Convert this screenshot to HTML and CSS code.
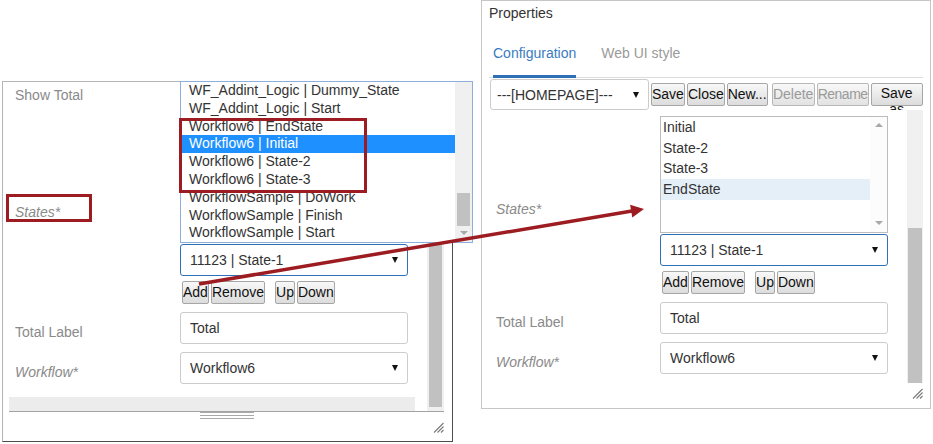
FILE: index.html
```html
<!DOCTYPE html>
<html>
<head>
<meta charset="utf-8">
<title>Properties</title>
<link rel="stylesheet" href="styles.css">
</head>
<body>
<div class="canvas">

  <section class="win win-left">
    <div class="scroll scroll-left">
      <div class="scroll-content">
        <div class="form form-left">
          <div class="lbl lbl-top">Show Total</div>
          <div class="ctl ctl-top"><input type="checkbox" class="chk"></div>

          <div class="lbl req">States*</div>
          <div class="ctl states">
            <div class="listbox listbox-left"></div>
            <div class="select focus"><span>11123 | State-1</span><i class="caret"></i></div>
            <div class="btnrow">
              <button class="btn">Add</button><button class="btn">Remove</button><button class="btn btn-up">Up</button><button class="btn">Down</button>
            </div>
          </div>

          <div class="lbl">Total Label</div>
          <div class="ctl"><input class="input" type="text" value="Total"></div>

          <div class="lbl req">Workflow*</div>
          <div class="ctl"><div class="select"><span>Workflow6</span><i class="caret"></i></div></div>
        </div>
      </div>
      <div class="vscroll"><div class="vthumb"></div></div>
      <div class="hscroll"></div>
    </div>
    <div class="foot foot-left">
      <div class="gripper"></div>
      <svg class="grip" width="11" height="11" viewBox="0 0 11 11"><path d="M1 10.5L10.5 1M4.5 10.5L10.5 4.5M8 10.5L10.5 8" stroke="#7a7a7a" stroke-width="1.1" fill="none"/></svg>
    </div>
  </section>

  <section class="win win-right">
    <div class="title">Properties</div>
    <nav class="tabs">
      <span class="tab active">Configuration</span>
      <span class="tab">Web UI style</span>
    </nav>
    <div class="toolbar">
      <div class="select sm"><span>---[HOMEPAGE]---</span><i class="caret"></i></div>
      <button class="btn">Save</button>
      <button class="btn">Close</button>
      <button class="btn">New...</button>
      <button class="btn btn-delete" disabled>Delete</button>
      <button class="btn btn-rename" disabled>Rename</button>
      <button class="btn btn-saveas"><span>Save as</span></button>
    </div>
    <div class="scroll scroll-right">
      <div class="scroll-content">
        <div class="form form-right">
          <div class="lbl req">States*</div>
          <div class="ctl states">
            <div class="listbox listbox-right">
              <ul class="opts">
                <li>Initial</li>
                <li>State-2</li>
                <li>State-3</li>
                <li class="hl">EndState</li>
              </ul>
              <div class="lb-scroll"><i class="tri-up"></i><i class="tri-down"></i></div>
            </div>
            <div class="select focus"><span>11123 | State-1</span><i class="caret"></i></div>
            <div class="btnrow">
              <button class="btn">Add</button><button class="btn">Remove</button><button class="btn btn-up">Up</button><button class="btn">Down</button>
            </div>
          </div>

          <div class="lbl">Total Label</div>
          <div class="ctl"><input class="input" type="text" value="Total"></div>

          <div class="lbl req">Workflow*</div>
          <div class="ctl"><div class="select"><span>Workflow6</span><i class="caret"></i></div></div>
        </div>
      </div>
      <div class="vscroll"><div class="vthumb"></div></div>
    </div>
    <div class="foot foot-right">
      <svg class="grip" width="11" height="11" viewBox="0 0 11 11"><path d="M1 10.5L10.5 1M4.5 10.5L10.5 4.5M8 10.5L10.5 8" stroke="#7a7a7a" stroke-width="1.1" fill="none"/></svg>
    </div>
  </section>

  <div class="dropdown">
    <ul class="dd-opts">
      <li>WF_Addint_Logic | Dummy_State</li>
      <li>WF_Addint_Logic | Start</li>
      <li>Workflow6 | EndState</li>
      <li class="sel">Workflow6 | Initial</li>
      <li>Workflow6 | State-2</li>
      <li>Workflow6 | State-3</li>
      <li>WorkflowSample | DoWork</li>
      <li>WorkflowSample | Finish</li>
      <li>WorkflowSample | Start</li>
    </ul>
    <div class="dd-scroll"><div class="dd-thumb"></div><i class="tri-down"></i></div>
  </div>

  <div class="mark mark-list"></div>
  <div class="mark mark-label"></div>

  <svg class="arrow" width="933" height="444" viewBox="0 0 933 444">
    <line x1="199" y1="284" x2="632" y2="211" stroke="#9c1c21" stroke-width="3.5"/>
    <polygon points="644,209 630.1,204.8 632.3,217.6" fill="#9c1c21"/>
  </svg>
</div>
</body>
</html>
```

FILE: styles.css
```css
* { box-sizing: border-box; }
html, body { margin: 0; padding: 0; background: #fff; }
body {
  font-family: "Liberation Sans", Arial, sans-serif;
  font-size: 14px;
  color: #333;
}
.canvas { position: relative; width: 933px; height: 444px; overflow: hidden; }

/* windows */
.win { position: absolute; background: #fff; display: flex; flex-direction: column; }
.win > * { flex: none; }
.win-left {
  left: 2px; top: 81px; width: 451px; height: 361px;
  border: 1px solid #b5b5b5;
  border-right-color: #4d4d4d;
  border-bottom-color: #4d4d4d;
}
.win-right {
  left: 481px; top: 0; width: 450px; height: 409px;
  border: 1px solid #c6c6c6;
}

/* scroll areas */
.scroll { display: grid; }
.scroll-content { overflow: hidden; grid-column: 1; grid-row: 1; }
.vscroll { background: #f0f0f0; display: flex; flex-direction: column; justify-content: flex-end; grid-column: 2; }
.vthumb { background: #c1c1c1; }
.hscroll { grid-column: 1; grid-row: 2; background: #ececec; margin-right: 12px; }

.scroll-left {
  height: 330px;
  margin: 0 8px 0 6px;
  border-bottom: 1px solid #a3a3a3;
  grid-template-columns: 1fr 17px;
  grid-template-rows: 1fr 14px;
}
.scroll-left .vscroll { grid-row: 1 / span 2; }
.scroll-left .vthumb { height: 250px; margin: 0 2px 4px; }

.scroll-right {
  height: 273px;
  margin: 0 7px;
  grid-template-columns: 1fr 16px;
  grid-template-rows: 1fr;
}
.scroll-right .vscroll { grid-row: 1; }
.scroll-right .vthumb { height: 155px; margin: 0 1px; }

/* footers */
.foot { display: flex; flex-direction: column; }
.foot-left { height: 29px; margin: 0 8px 0 6px; }
.foot-right { height: 25px; margin: 0 7px; }
.gripper {
  width: 54px; height: 7px; align-self: center;
  background: repeating-linear-gradient(to bottom, #a8a8a8 0 1px, transparent 1px 3px);
}
.grip { display: block; align-self: flex-end; }
.foot-left .grip { margin-top: 3px; }
.foot-right .grip { margin-top: 5px; }

/* header / tabs / toolbar */
.title { height: 21px; padding: 3px 0 0 7px; line-height: 18px; color: #333; }
.tabs {
  display: flex; gap: 25px;
  margin: 0 7px; padding: 0 4px;
  border-bottom: 1px solid #dcdcdc;
}
.tab {
  padding: 22px 0 13px;
  line-height: 18px;
  color: #9a9a9a;
  border-bottom: 3px solid transparent;
  margin-bottom: -1px;
}
.tab.active { color: #3a7cc0; border-bottom-color: #2f6fb5; }

.toolbar {
  display: flex; align-items: center; gap: 2px;
  height: 31px; margin-top: 1px; padding-left: 8px;
  overflow: hidden;
}
.toolbar > * { flex: none; }

/* form */
.form { display: grid; row-gap: 8px; align-items: center; }
.form-left { grid-template-columns: 165px 228px; padding-left: 6px; }
.form-right { grid-template-columns: 164px 228px; padding: 6px 0 0 7px; }
.lbl { color: #8a8a8a; line-height: 18px; padding-top: 8px; white-space: nowrap; }
.lbl.req { font-style: italic; }
.lbl-top { padding-top: 4px; align-self: start; }
.ctl-top { align-self: start; }
.chk { margin: 4px 0 0 4px; }

.states { display: flex; flex-direction: column; }

/* controls */
.select {
  height: 32px;
  border: 1px solid #cccccc; border-radius: 3px;
  background: #fff;
  display: flex; align-items: center; justify-content: space-between;
  padding: 0 9px;
  color: #333;
  white-space: nowrap;
}
.select.focus { border-color: #2f70b6; }
.states .select { margin-top: 1px; }
.select.sm { width: 159px; height: 31px; padding: 0 9px 0 6px; }
.caret {
  display: block; width: 0; height: 0;
  border-left: 3.5px solid transparent;
  border-right: 3.5px solid transparent;
  border-top: 6px solid #111;
}
.input {
  display: block; width: 100%; height: 32px;
  border: 1px solid #cccccc; border-radius: 3px;
  padding: 0 9px;
  font: inherit; color: #333; background: #fff;
  outline: none;
}

.listbox { display: flex; border: 1px solid #bcbcbc; background: #fff; }
.listbox-right { height: 117px; }
.listbox-left { height: 131px; }
.opts { flex: 1; list-style: none; margin: 0; padding: 0; }
.opts li { height: 20.66px; line-height: 20.66px; padding-left: 2px; color: #333; }
.opts li.hl { background: #e5eff8; }
.lb-scroll {
  width: 17px; background: #fcfcfc;
  display: flex; flex-direction: column; justify-content: space-between; align-items: center;
  padding: 6px 0 7px;
}
.tri-up, .tri-down { display: block; width: 0; height: 0; border-left: 4px solid transparent; border-right: 4px solid transparent; }
.tri-up { border-bottom: 4px solid #a8a8a8; }
.tri-down { border-top: 4px solid #a8a8a8; }

.btnrow { display: flex; gap: 2px; margin-top: 5px; padding-left: 2px; }
.btn {
  height: 23px;
  padding: 2px 0 3px;
  border: 1px solid #a6a6a6; border-radius: 2px;
  background: linear-gradient(#f8f8f8, #dcdcdc);
  font: 14px/16px "Liberation Sans", Arial, sans-serif;
  color: #111;
  white-space: nowrap;
  overflow: visible;
}
.btn:disabled { color: #9a9a9a; border-color: #b8b8b8; background: linear-gradient(#f8f8f8, #e2e2e2); }
.btn-up { margin-left: 8px; }
.btn-delete { margin-left: 2px; width: 43px; }
.btn-rename { width: 52px; letter-spacing: -0.5px; }
.btn-saveas {
  width: 52px; padding: 0;
  display: flex; align-items: flex-start; justify-content: center;
  white-space: normal;
}
.btn-saveas span { display: block; text-align: center; line-height: 16px; padding-top: 1px; }

/* open dropdown list (overlay) */
.dropdown {
  position: absolute; left: 180px; top: 81px;
  width: 293px; height: 162px;
  border: 1px solid #8eaedb; background: #fff;
  display: flex; z-index: 5;
}
.dd-opts { flex: 1; list-style: none; margin: 0; padding: 0; }
.dd-opts li { height: 17.8px; line-height: 17.8px; padding-left: 8px; color: #333; white-space: nowrap; }
.dd-opts li.sel { background: #1e90ff; color: #fff; }
.dd-scroll { width: 17px; background: #f0f0f0; display: flex; flex-direction: column; align-items: center; }
.dd-thumb { width: 13px; height: 33px; margin-top: 111px; background: #c1c1c1; }
.dd-scroll .tri-down { margin-top: auto; margin-bottom: 7px; }

/* annotations */
.mark { position: absolute; border: 3px solid #9c1c21; z-index: 6; }
.mark-list { left: 179px; top: 118px; width: 188px; height: 75px; }
.mark-label { left: 6px; top: 194px; width: 86px; height: 28px; }
.arrow { position: absolute; left: 0; top: 0; z-index: 7; pointer-events: none; }
```
